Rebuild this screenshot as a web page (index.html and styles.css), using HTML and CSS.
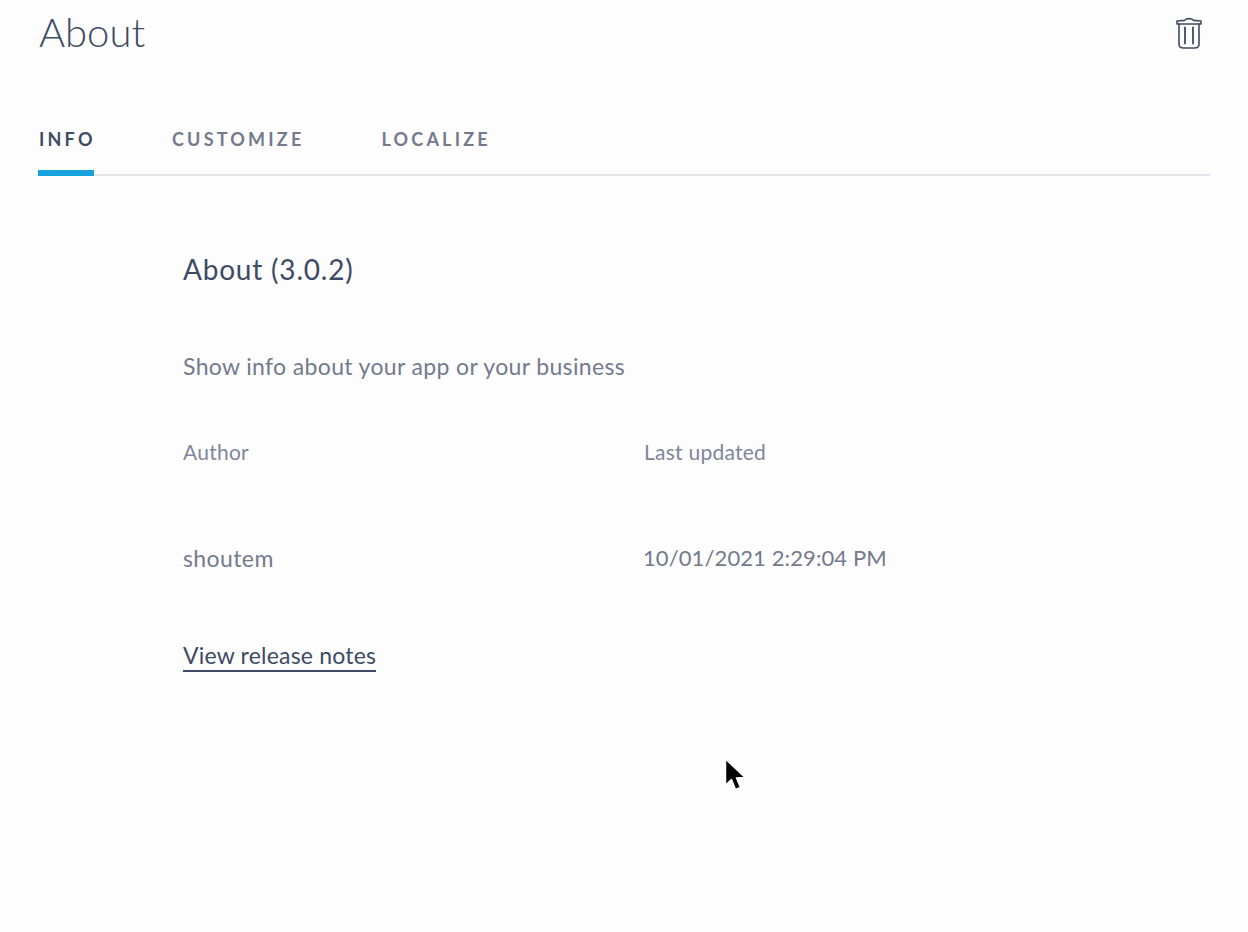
FILE: index.html
```html
<!DOCTYPE html>
<html lang="en">
<head>
<meta charset="utf-8">
<title>About</title>
<link rel="stylesheet" href="styles.css">
</head>
<body>
<div class="page">
  <header class="header">
    <h1 class="title">About</h1>
    <svg class="trash" width="26" height="33" viewBox="0 0 26 33" fill="none" stroke="#3d4a63" stroke-width="1.6" stroke-linejoin="round" stroke-linecap="round">
      <path d="M1 7 L1 4 L8.5 3.4 C9.5 2 10.5 1.6 13 1.6 C15.5 1.6 16.5 2 17.5 3.4 L25 4 L25 7 Z"/>
      <path d="M3 7 L3 27 C3 29.8 4.8 31 7.5 31 L18.5 31 C21.2 31 23 29.8 23 27 L23 7"/>
      <path d="M9 10.5 L9 26.5 M17 10.5 L17 26.5" stroke-width="1.8"/>
    </svg>
  </header>
  <nav class="tabs">
    <a class="tab tab-active">INFO</a>
    <a class="tab">CUSTOMIZE</a>
    <a class="tab">LOCALIZE</a>
  </nav>
  <main class="content">
    <h2 class="heading">About (3.0.2)</h2>
    <p class="desc">Show info about your app or your business</p>
    <div class="meta">
      <div class="meta-label">Author</div>
      <div class="meta-label">Last updated</div>
      <div class="meta-value">shoutem</div>
      <div class="meta-value meta-date">10/01/2021 2:29:04 PM</div>
    </div>
    <a class="link">View release notes</a>
  </main>
</div>
<svg class="cursor" width="24" height="36" viewBox="0 0 24 36">
  <path d="M1.5 1 L1.5 27 L7.5 21.5 L11.5 31.5 L16.5 29.5 L12.5 20 L21 19.5 Z" fill="#000" stroke="#fff" stroke-width="1.5" stroke-linejoin="round"/>
</svg>
</body>
</html>
```
FILE: styles.css
```css
* { box-sizing: border-box; }
html, body { margin: 0; padding: 0; }
body {
  background: #fefdfe;
  font-family: "Lato", "Noto Sans", sans-serif;
  color: #737a8c;
  height: 932px;
  overflow: hidden;
  position: relative;
}
.page { padding: 0 38px; }
.header {
  display: flex;
  justify-content: space-between;
  align-items: flex-start;
  height: 120px;
}
.title {
  margin: 10px 0 0 1px;
  font-size: 40px;
  line-height: 44px;
  font-weight: 300;
  color: #3d4a63;
}
.trash { margin: 17px 8px 0 0; }
.tabs {
  display: flex;
  gap: 76px;
  height: 56px;
  border-bottom: 2px solid #e3e5ec;
}
.tab {
  height: 56px;
  padding: 7px 0 0 1px;
  line-height: 24px;
  font-size: 18px;
  font-weight: 700;
  letter-spacing: 3.2px;
  color: #737a8c;
}
.tab-active {
  width: 56px;
  margin-right: 1px;
  color: #3d4a63;
  white-space: nowrap;
  border-bottom: 6px solid #16a2dc;
}
.content { padding: 75px 0 0 145px; }
.heading {
  margin: 0;
  font-size: 28px;
  line-height: 36px;
  font-weight: 400;
  letter-spacing: 0.8px;
  color: #3d4a63;
}
.desc {
  margin: 63px 0 0 0;
  font-size: 23px;
  line-height: 32px;
  letter-spacing: 0.35px;
}
.meta {
  display: grid;
  grid-template-columns: 461px 1fr;
  grid-template-rows: 32px 32px;
  row-gap: 74px;
  margin-top: 54px;
}
.meta-label { font-size: 21px; line-height: 32px; letter-spacing: 0.25px; color: #80869a; }
.meta-value { font-size: 23px; line-height: 32px; letter-spacing: 0.4px; }
.meta-date { font-size: 22px; letter-spacing: 0.1px; margin-left: -1px; }
.link {
  display: inline-block;
  margin-top: 67px;
  font-size: 23px;
  line-height: 29px;
  letter-spacing: 0.2px;
  color: #3d4a63;
  border-bottom: 2px solid #3d4a63;
}
.cursor { position: absolute; left: 724px; top: 758px; }
```
